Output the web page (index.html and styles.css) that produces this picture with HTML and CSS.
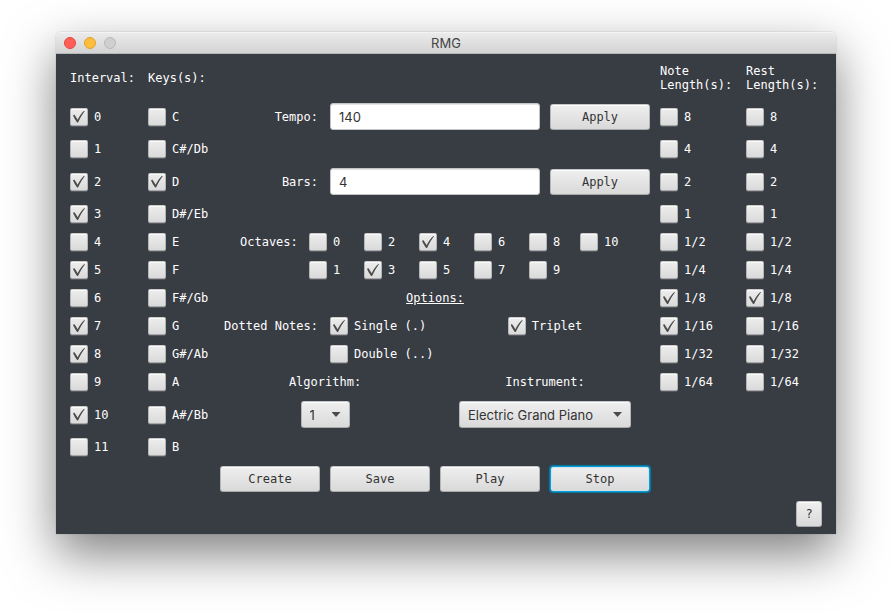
FILE: index.html
```
<!DOCTYPE html>
<html lang="en">
<head>
<meta charset="utf-8">
<meta name="viewport" content="width=device-width, initial-scale=1">
<title>RMG</title>
<link rel="stylesheet" href="styles.css">
</head>
<body>
<div class="window">
  <header class="titlebar">
    <div class="lights">
      <span class="light light-close"></span>
      <span class="light light-minimize"></span>
      <span class="light light-zoom"></span>
    </div>
    <h1 class="title">RMG</h1>
  </header>
  <main class="body">
    <form class="panel">
      <div class="column" role="group" aria-labelledby="interval-title">
        <h2 class="heading" id="interval-title">Interval:</h2>
        <label class="check"><input type="checkbox" checked>0</label>
        <label class="check"><input type="checkbox">1</label>
        <label class="check"><input type="checkbox" checked>2</label>
        <label class="check"><input type="checkbox" checked>3</label>
        <label class="check"><input type="checkbox">4</label>
        <label class="check"><input type="checkbox" checked>5</label>
        <label class="check"><input type="checkbox">6</label>
        <label class="check"><input type="checkbox" checked>7</label>
        <label class="check"><input type="checkbox" checked>8</label>
        <label class="check"><input type="checkbox">9</label>
        <label class="check"><input type="checkbox" checked>10</label>
        <label class="check"><input type="checkbox">11</label>
      </div>

      <div class="column" role="group" aria-labelledby="keys-title">
        <h2 class="heading" id="keys-title">Keys(s):</h2>
        <label class="check"><input type="checkbox">C</label>
        <label class="check"><input type="checkbox">C#/Db</label>
        <label class="check"><input type="checkbox" checked>D</label>
        <label class="check"><input type="checkbox">D#/Eb</label>
        <label class="check"><input type="checkbox">E</label>
        <label class="check"><input type="checkbox">F</label>
        <label class="check"><input type="checkbox">F#/Gb</label>
        <label class="check"><input type="checkbox">G</label>
        <label class="check"><input type="checkbox">G#/Ab</label>
        <label class="check"><input type="checkbox">A</label>
        <label class="check"><input type="checkbox">A#/Bb</label>
        <label class="check"><input type="checkbox">B</label>
      </div>

      <div class="settings">
        <label class="field-label row-tempo" for="tempo">Tempo:</label>
        <input class="field row-tempo" id="tempo" type="text" value="140">
        <button class="button row-tempo apply" type="button">Apply</button>

        <label class="field-label row-bars" for="bars">Bars:</label>
        <input class="field row-bars" id="bars" type="text" value="4">
        <button class="button row-bars apply" type="button">Apply</button>

        <div class="octaves" role="group" aria-labelledby="octaves-title">
          <span class="octaves-title" id="octaves-title">Octaves:</span>
          <label class="check"><input type="checkbox">0</label>
          <label class="check"><input type="checkbox">1</label>
          <label class="check"><input type="checkbox">2</label>
          <label class="check"><input type="checkbox" checked>3</label>
          <label class="check"><input type="checkbox" checked>4</label>
          <label class="check"><input type="checkbox">5</label>
          <label class="check"><input type="checkbox">6</label>
          <label class="check"><input type="checkbox">7</label>
          <label class="check"><input type="checkbox">8</label>
          <label class="check"><input type="checkbox">9</label>
          <label class="check"><input type="checkbox">10</label>
        </div>

        <h2 class="options-title">Options:</h2>

        <span class="field-label row-single">Dotted Notes:</span>
        <label class="check dotted row-single"><input type="checkbox" checked>Single (.)</label>
        <label class="check right-half row-single"><input type="checkbox" checked>Triplet</label>
        <label class="check dotted row-double"><input type="checkbox">Double (..)</label>

        <label class="left-half row-choice-label" for="algorithm">Algorithm:</label>
        <label class="right-half row-choice-label" for="instrument">Instrument:</label>
        <div class="combo left-half row-choice">
          <select id="algorithm"><option>1</option></select>
        </div>
        <div class="combo combo-wide right-half row-choice">
          <select id="instrument"><option>Electric Grand Piano</option></select>
        </div>

        <button class="button row-actions" type="button">Create</button>
        <button class="button row-actions" type="button">Save</button>
        <button class="button row-actions" type="button">Play</button>
        <button class="button button-focused row-actions" type="button">Stop</button>
      </div>

      <div class="column" role="group" aria-labelledby="note-title">
        <h2 class="heading" id="note-title">Note Length(s):</h2>
        <label class="check"><input type="checkbox">8</label>
        <label class="check"><input type="checkbox">4</label>
        <label class="check"><input type="checkbox">2</label>
        <label class="check"><input type="checkbox">1</label>
        <label class="check"><input type="checkbox">1/2</label>
        <label class="check"><input type="checkbox">1/4</label>
        <label class="check"><input type="checkbox" checked>1/8</label>
        <label class="check"><input type="checkbox" checked>1/16</label>
        <label class="check"><input type="checkbox">1/32</label>
        <label class="check"><input type="checkbox">1/64</label>
      </div>

      <div class="column" role="group" aria-labelledby="rest-title">
        <h2 class="heading" id="rest-title">Rest Length(s):</h2>
        <label class="check"><input type="checkbox">8</label>
        <label class="check"><input type="checkbox">4</label>
        <label class="check"><input type="checkbox">2</label>
        <label class="check"><input type="checkbox">1</label>
        <label class="check"><input type="checkbox">1/2</label>
        <label class="check"><input type="checkbox">1/4</label>
        <label class="check"><input type="checkbox" checked>1/8</label>
        <label class="check"><input type="checkbox">1/16</label>
        <label class="check"><input type="checkbox">1/32</label>
        <label class="check"><input type="checkbox">1/64</label>
      </div>
    </form>
    <footer class="footer">
      <button class="button help" type="button">?</button>
    </footer>
  </main>
</div>
</body>
</html>
```
FILE: styles.css
```
* {
  box-sizing: border-box;
}

body {
  min-height: 100vh;
  margin: 0;
  padding: 32px 56px;
  background: #fff;
  color: #fff;
  font: 12px/14px "DejaVu Sans Mono", monospace;
}

h1,
h2 {
  margin: 0;
  font: inherit;
}

.window {
  border-radius: 5px 5px 0 0;
  box-shadow: 0 0 1px rgba(0, 0, 0, 0.5), 0 20px 50px rgba(0, 0, 0, 0.5);
}

.titlebar {
  display: grid;
  grid-template-columns: 1fr auto 1fr;
  align-items: center;
  height: 22px;
  padding: 0 8px;
  border-bottom: 1px solid #b4b8b8;
  border-radius: 5px 5px 0 0;
  background: linear-gradient(#ececec, #d3d3d3);
  box-shadow: inset 0 1px #f4f4f4;
}

.lights {
  display: flex;
  gap: 8px;
}

.light {
  width: 12px;
  height: 12px;
  border: 1px solid #e2463f;
  border-radius: 50%;
  background: #ff5f57;
}

.light-minimize {
  border-color: #e1a12e;
  background: #ffbd3e;
}

.light-zoom {
  border-color: #b9b9b9;
  background: #cfcfcf;
}

.title {
  color: #444;
  font: 13px/16px Inter, sans-serif;
}

.body {
  padding: 10px 14px 7px;
  background: #383c43;
}

.panel {
  display: grid;
  grid-template-columns: 68px 62px 1fr 76px 76px;
  grid-template-rows: 29px repeat(13, auto);
  gap: 10px;
}

.column {
  display: grid;
  grid-row: 1 / -1;
  grid-template-rows: subgrid;
  align-items: center;
  min-width: 0;
}

.heading {
  padding-bottom: 2px;
}

.check {
  display: flex;
  align-items: center;
  gap: 6px;
  white-space: nowrap;
}

.check input {
  display: grid;
  flex: none;
  place-content: center;
  width: 18px;
  height: 18px;
  margin: 0;
  appearance: none;
  border: 1px solid;
  border-color: #cbcbcb #b5b6b7 #a7a8aa;
  border-radius: 2px;
  background: linear-gradient(#ededed, #dadada);
  box-shadow: inset 0 1px #fafafa, 0 1px rgba(255, 255, 255, 0.15);
}

.check input:checked::before {
  width: 12px;
  height: 12px;
  background: #4a4a4a;
  clip-path: path("M0 4.9L1.2 4C2.5 5.4 3.6 7.2 4.6 9.3 6.6 5.3 8.8 2.2 11.4 0L12 .3C9.3 3.8 7.1 7.6 5.2 11.8 4.9 12.1 4.5 12.1 4.1 12 2.6 9.8 1.2 7.4 0 4.9z");
  content: "";
}

.settings {
  display: grid;
  grid-row: 1 / -1;
  grid-template-columns: repeat(4, 1fr);
  grid-template-rows: subgrid;
  column-gap: 10px;
  align-items: center;
}

.row-tempo { grid-row: 2; }
.row-bars { grid-row: 4; }
.row-single { grid-row: 9; }
.row-double { grid-row: 10; }
.row-choice-label { grid-row: 11; }
.row-choice { grid-row: 12; }
.row-actions { grid-row: 14; }

.field-label {
  grid-column: 1;
  justify-self: end;
  padding-right: 2px;
  white-space: nowrap;
}

.field {
  grid-column: 2 / 4;
  width: 100%;
  height: 27px;
  padding: 0 8px;
  border: 1px solid #c3c4c5;
  border-radius: 3px;
  background: #fff;
  box-shadow: inset 0 1px 1px #e4e4e4;
  color: #333;
  font: 13px/16px Inter, sans-serif;
}

.apply {
  grid-column: 4;
}

.button {
  width: 100%;
  height: 26px;
  padding: 0;
  border: 1px solid;
  border-color: #c6c7c8 #b5b6b7 #a7a8aa;
  border-radius: 3px;
  background: linear-gradient(#efefef, #d9d9d9);
  box-shadow: inset 0 1px #fcfcfc;
  color: #333;
  font: inherit;
}

.button-focused {
  border-color: #039ed3;
  box-shadow: 0 0 1px 1px #087ca5, inset 0 0 0 1px #d3e3ee;
}

.octaves {
  display: grid;
  grid-row: 6 / 8;
  grid-column: 1 / -1;
  grid-template-rows: subgrid;
  grid-template-columns: 59px repeat(4, 45px) 41px auto;
  grid-auto-flow: column;
  column-gap: 10px;
  justify-self: start;
  align-items: center;
  padding-left: 20px;
}

.octaves-title {
  grid-row: 1;
}

.octaves .check:nth-of-type(odd) { grid-row: 1; }
.octaves .check:nth-of-type(even) { grid-row: 2; }

.options-title {
  grid-row: 8;
  grid-column: 1 / -1;
  justify-self: center;
  text-decoration: underline;
}

.dotted {
  grid-column: 2 / 4;
  justify-self: start;
}

.left-half {
  grid-column: 1 / 3;
  justify-self: center;
}

.right-half {
  grid-column: 3 / 5;
  justify-self: center;
}

.combo {
  display: grid;
  align-items: center;
  width: 49px;
}

.combo-wide {
  width: 172px;
}

.combo select {
  grid-area: 1 / 1;
  width: 100%;
  height: 27px;
  padding: 0 8px;
  appearance: none;
  border: 1px solid;
  border-color: #c6c7c8 #b5b6b7 #a7a8aa;
  border-radius: 3px;
  background: linear-gradient(#efefef, #dadada);
  box-shadow: inset 0 1px #fcfcfc;
  color: #333;
  font: 13px/16px Inter, sans-serif;
}

.combo::after {
  z-index: 1;
  grid-area: 1 / 1;
  justify-self: end;
  width: 9px;
  height: 5px;
  margin-right: 9px;
  background: #4a4a4a;
  clip-path: polygon(0 0, 100% 0, 50% 100%);
  content: "";
  pointer-events: none;
}

.footer {
  display: flex;
  justify-content: flex-end;
  padding-top: 9px;
}

.help {
  width: 26px;
}
```
